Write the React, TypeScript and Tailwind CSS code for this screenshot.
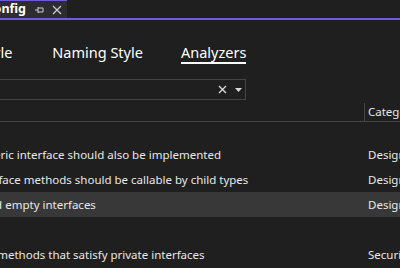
import React from "react";

const rules = [
  { title: "Generic interface should also be implemented", category: "Design", selected: false },
  { title: "Interface methods should be callable by child types", category: "Design", selected: false },
  { title: "Avoid empty interfaces", category: "Design", selected: true },
  { title: "", category: "", selected: false },
  { title: "Seal methods that satisfy private interfaces", category: "Security", selected: false },
];

const App = () => {
  return (
    <div
      className="w-[400px] h-[268px] overflow-hidden bg-[#1f1f1f] text-[#e8e8e8]"
      style={{ fontFamily: '"Noto Sans", "Open Sans", sans-serif' }}
    >
      {/* document tab strip */}
      <div className="h-[18px] flex">
        <div className="h-full w-[67px] bg-[#2d2d30] border-t border-[#6e5bd8] flex items-center justify-end pr-[5px] gap-[8px] overflow-hidden">
          <span className="text-[12.5px] font-bold text-white whitespace-nowrap leading-none">.editorconfig</span>
          <svg width="10" height="10" viewBox="0 0 10 10" className="shrink-0">
            <path d="M1 5h3M4 2v6M4 3h5v4H4" stroke="#cfcfcf" strokeWidth="1" fill="none" />
          </svg>
          <svg width="10" height="10" viewBox="0 0 10 10" className="shrink-0">
            <path d="M1 1l8 8M9 1l-8 8" stroke="#cfcfcf" strokeWidth="1.2" />
          </svg>
        </div>
      </div>
      <div className="h-[2px] bg-[#6e5bd8]" />

      {/* settings tabs */}
      <div className="pt-[22px] flex items-end ml-[-59px] text-[14.5px] text-white">
        <span className="leading-[20px] pb-[2px] mr-[40px]">Code Style</span>
        <span className="leading-[20px] pb-[2px] mr-[38px]">Naming Style</span>
        <span className="leading-[20px] border-b-2 border-white">Analyzers</span>
      </div>

      {/* search */}
      <div className="mt-[15px] h-[21px] w-[256px] ml-[-10px] border border-[#454545] flex items-center justify-end pr-[3px] gap-[8px]">
        <svg width="9" height="9" viewBox="0 0 9 9">
          <path d="M1 1l7 7M8 1l-7 7" stroke="#d8d8d8" strokeWidth="1.4" />
        </svg>
        <svg width="7" height="4" viewBox="0 0 7 4">
          <path d="M0 0h7L3.5 4z" fill="#d8d8d8" />
        </svg>
      </div>

      {/* header */}
      <div className="h-[22px] flex border-b border-[#454545]">
        <div className="w-[364px] shrink-0" />
        <div className="mt-[3px] border-l border-[#454545] pl-[3px] text-[11.5px] leading-[18px] text-[#e8e8e8] whitespace-nowrap">
          Category
        </div>
      </div>

      <div className="h-[20px]" />

      {rules.map((r, i) => (
        <div
          key={i}
          className={`h-[25px] flex items-center text-[11.5px] whitespace-nowrap ${r.selected ? "bg-[#383838]" : ""}`}
        >
          <div className="w-[368px] shrink-0 ml-[-28px]">{r.title}</div>
          <div className="ml-[28px]">{r.category}</div>
        </div>
      ))}
    </div>
  );
};

export default App;
